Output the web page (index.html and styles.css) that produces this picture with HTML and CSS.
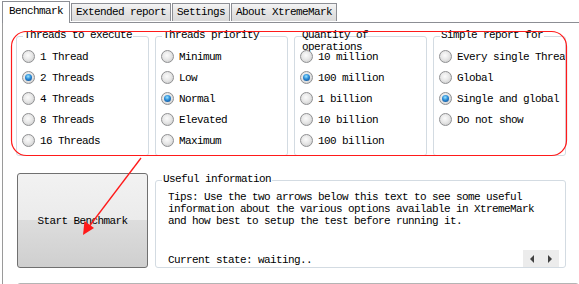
FILE: index.html
```html
<!DOCTYPE html>
<html>
<head>
    <title>XtremeMark</title>
    <link rel="stylesheet" href="styles.css">
</head>
<body>
    <div class="window">
        <div class="tabs">
            <div class="tab active">Benchmark</div>
            <div class="tab">Extended report</div>
            <div class="tab">Settings</div>
            <div class="tab">About XtremeMark</div>
        </div>

        <div class="panel">
            <div class="groups">
                <!-- threads -->
                <div class="group">
                    <span class="legend">Threads to execute</span>
                    <div class="options">
                        <label class="option"><span class="radio"></span>1 Thread</label>
                        <label class="option"><span class="radio checked"></span>2 Threads</label>
                        <label class="option"><span class="radio"></span>4 Threads</label>
                        <label class="option"><span class="radio"></span>8 Threads</label>
                        <label class="option"><span class="radio"></span>16 Threads</label>
                    </div>
                </div>

                <!-- priority -->
                <div class="group">
                    <span class="legend">Threads priority</span>
                    <div class="options">
                        <label class="option"><span class="radio"></span>Minimum</label>
                        <label class="option"><span class="radio"></span>Low</label>
                        <label class="option"><span class="radio checked"></span>Normal</label>
                        <label class="option"><span class="radio"></span>Elevated</label>
                        <label class="option"><span class="radio"></span>Maximum</label>
                    </div>
                </div>

                <!-- operations -->
                <div class="group">
                    <span class="legend legend-wrap">Quantity of operations</span>
                    <div class="options">
                        <label class="option"><span class="radio"></span>10 million</label>
                        <label class="option"><span class="radio checked"></span>100 million</label>
                        <label class="option"><span class="radio"></span>1 billion</label>
                        <label class="option"><span class="radio"></span>10 billion</label>
                        <label class="option"><span class="radio"></span>100 billion</label>
                    </div>
                </div>

                <!-- report -->
                <div class="group">
                    <span class="legend">Simple report for</span>
                    <div class="options">
                        <label class="option"><span class="radio"></span>Every single Thread</label>
                        <label class="option"><span class="radio"></span>Global</label>
                        <label class="option"><span class="radio checked"></span>Single and global</label>
                        <label class="option"><span class="radio"></span>Do not show</label>
                    </div>
                </div>
            </div>

            <div class="bottom">
                <button class="start-btn">Start Benchmark</button>
                <div class="info">
                    <span class="legend">Useful information</span>
                    <p class="tips">Tips: Use the two arrows below this text to see some useful
information about the various options available in XtremeMark
and how best to setup the test before running it.</p>
                    <div class="status-row">
                        <span class="status">Current state: waiting..</span>
                        <div class="arrows">
                            <span class="arrow-left"></span>
                            <span class="arrow-right"></span>
                        </div>
                    </div>
                </div>
            </div>

            <div class="next-group"></div>
        </div>

        <!-- red annotation -->
        <svg class="markup" width="579" height="284" viewBox="0 0 579 284">
            <rect x="11.5" y="31.5" width="555" height="124" rx="15" ry="15" fill="none" stroke="#ff1a1a" stroke-width="1.2"/>
            <line x1="141" y1="158" x2="88" y2="228" stroke="#ff1a1a" stroke-width="1.3"/>
            <polygon points="83,235 84.5,221 94,228" fill="#ff1a1a"/>
        </svg>
    </div>
</body>
</html>
```

FILE: styles.css
```css
body {
    margin: 0;
    background: white;
    font-family: "Liberation Mono", "DejaVu Sans Mono", monospace;
    font-size: 11px;
    letter-spacing: -0.6px;
    color: #000;
    overflow: hidden;
}
.window {
    position: relative;
    width: 579px;
    height: 284px;
    overflow: hidden;
}
.tabs {
    display: flex;
    align-items: flex-end;
    height: 22px;
    padding-left: 2px;
    position: relative;
    z-index: 2;
}
.tab {
    height: 17px;
    line-height: 17px;
    padding: 0 4px;
    margin-left: 1px;
    margin-bottom: 1px;
    border: 1px solid #8c8e94;
    border-bottom: none;
    background: linear-gradient(#f4f4f4, #e4e4e4 50%, #d9d9d9);
    white-space: nowrap;
}
.tab.active {
    height: 21px;
    line-height: 19px;
    padding: 0 6px;
    margin-left: 0;
    margin-bottom: -1px;
    background: white;
    border-color: #8c8e94;
}
.panel {
    margin-left: 2px;
    border-left: 1px solid #9a9a9a;
    border-top: 1px solid #8c8e94;
    padding: 13px 0 0 13px;
    height: 300px;
}
.groups {
    display: flex;
    gap: 6px;
}
.group {
    position: relative;
    width: 131px;
    height: 118px;
    border: 1px solid #d3dbe2;
    border-radius: 3px;
    overflow: hidden;
}
.group .legend {
    top: -1px;
}
.legend {
    position: absolute;
    top: -7px;
    left: 6px;
    padding: 0 1px;
    line-height: 12px;
    background: white;
    white-space: nowrap;
    z-index: 0;
}
.legend-wrap {
    white-space: normal;
    width: 68px;
    background: transparent;
}
.group .legend {
    top: -8px;
}
.group {
    overflow: visible;
}
.options {
    position: relative;
    z-index: 1;
    display: flex;
    flex-direction: column;
    padding: 9px 0 0 5px;
    overflow: hidden;
    width: 126px;
}
.option {
    display: flex;
    align-items: center;
    gap: 5px;
    height: 21px;
    white-space: nowrap;
}
.radio {
    flex: none;
    width: 11px;
    height: 11px;
    border: 1px solid #8f9092;
    border-radius: 50%;
    background: radial-gradient(circle at 45% 40%, #fbfbfb 0, #e8e8e8 45%, #c4c4c4 100%);
    position: relative;
}
.radio.checked::after {
    content: "";
    position: absolute;
    left: 2px;
    top: 2px;
    width: 7px;
    height: 7px;
    border-radius: 50%;
    background: radial-gradient(circle at 45% 35%, #9be6ff 0, #2a8ad6 45%, #0b3f7f 100%);
}
.bottom {
    display: flex;
    align-items: flex-start;
    margin-top: 17px;
    padding-left: 1px;
}
.start-btn {
    width: 131px;
    height: 95px;
    border: 1px solid #707070;
    border-radius: 3px;
    background: linear-gradient(#f2f2f2 0, #ebebeb 50%, #dddddd 50%, #cfcfcf 100%);
    font-family: inherit;
    font-size: 11px;
    letter-spacing: -0.6px;
    color: #000;
    padding: 0;
}
.info {
    position: relative;
    margin: 7px 0 0 7px;
    width: 409px;
    height: 86px;
    border: 1px solid #d3dbe2;
    border-radius: 3px;
    display: flex;
    flex-direction: column;
}
.info .legend {
    top: -8px;
}
.tips {
    margin: 0;
    padding: 10px 0 0 12px;
    line-height: 12px;
    white-space: pre;
}
.status-row {
    margin-top: auto;
    display: flex;
    justify-content: space-between;
    align-items: flex-end;
    padding: 0 6px 0 12px;
}
.status {
    line-height: 12px;
    margin-bottom: 1px;
}
.arrows {
    display: flex;
    align-items: center;
    justify-content: space-around;
    width: 36px;
    height: 17px;
    background: #ececec;
}
.arrow-left,
.arrow-right {
    width: 0;
    height: 0;
    border-top: 4px solid transparent;
    border-bottom: 4px solid transparent;
}
.arrow-left {
    border-right: 4px solid #404040;
}
.arrow-right {
    border-left: 4px solid #404040;
}
.next-group {
    margin: 15px 0 0 1px;
    height: 20px;
    border: 1px solid #b4b4b4;
    border-radius: 3px;
}
.markup {
    position: absolute;
    left: 0;
    top: 0;
    z-index: 3;
    pointer-events: none;
}
```
